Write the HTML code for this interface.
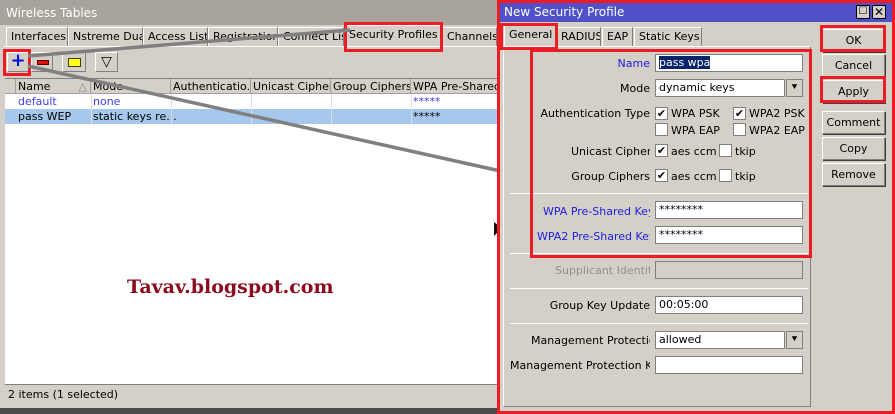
<!DOCTYPE html>
<html><head><meta charset="utf-8"><style>
*{margin:0;padding:0;box-sizing:border-box}
body{width:895px;height:414px;overflow:hidden;background:#4a4a4a;font-family:"DejaVu Sans","Liberation Sans",sans-serif;font-size:11px;color:#000;position:relative}
.a{position:absolute}
.bg{background:#d4d0c8}
.tab{position:absolute;top:27px;height:19px;border:1px solid #fff;border-right-color:#808080;border-bottom:none;line-height:18px;padding-left:4px;background:#d4d0c8;white-space:nowrap;overflow:hidden}
.red{position:absolute;border:3px solid #ed1c24}
.in{position:absolute;background:#fff;border:1px solid #808080;height:18px;line-height:16px;padding-left:3px;white-space:nowrap}
.lbl{position:absolute;right:245px;text-align:right;white-space:nowrap}
.cl{position:absolute;white-space:nowrap;overflow:hidden}
.btn{position:absolute;left:822px;width:63px;height:23px;border:1px solid #808080;border-top-color:#fff;border-left-color:#fff;box-shadow:1px 1px 0 #404040;text-align:center;line-height:21px;background:#d4d0c8}
.cb{position:absolute;width:13px;height:13px;background:#fff;border:1px solid #808080;font-size:11px;line-height:11px;text-align:center}
.sep{position:absolute;left:510px;width:298px;height:1px;background:#b0aca4;border-bottom:1px solid #fff}
.th{position:absolute;top:79px;height:15px;border-right:1px solid #a0a0a0;padding-left:2px;line-height:15px;white-space:nowrap;overflow:hidden}
.blue{color:#2020e0}
</style></head><body>
<div class="a bg" style="left:0;top:0;width:500px;height:408px"></div>
<div class="a" style="left:0;top:0;width:500px;height:25px;background:#a8a49c;color:#fff;font-size:12px;line-height:26px;padding-left:6px">Wireless Tables</div>
<div class="tab" style="left:6px;width:62px">Interfaces</div>
<div class="tab" style="left:68px;width:75px">Nstreme Dual</div>
<div class="tab" style="left:143px;width:65px">Access List</div>
<div class="tab" style="left:208px;width:70px">Registration</div>
<div class="tab" style="left:278px;width:66px">Connect List</div>
<div class="tab" style="left:344px;width:98px;top:25px;height:21px">Security Profiles</div>
<div class="tab" style="left:442px;width:55px">Channels</div>
<div class="a" style="left:4px;top:46px;width:493px;height:1px;background:#fff"></div>
<div class="a" style="left:7px;top:52px;width:22px;height:20px;border:1px solid #fff;border-right-color:#808080;border-bottom-color:#808080;color:#0010e0;font-weight:bold;font-size:18px;line-height:16px;text-align:center">+</div>
<div class="a" style="left:31px;top:52px;width:22px;height:20px;border:1px solid #fff;border-right-color:#808080;border-bottom-color:#808080"><div class="a" style="left:5px;top:7px;width:12px;height:5px;background:#e01010;border:1px solid #600"></div></div>
<div class="a" style="left:62px;top:52px;width:24px;height:20px;border:1px solid #fff;border-right-color:#808080;border-bottom-color:#808080"><div class="a" style="left:5px;top:5px;width:13px;height:9px;background:#ffff20;border:1px solid #404000"></div></div>
<div class="a" style="left:95px;top:52px;width:23px;height:20px;border:1px solid #fff;border-right-color:#808080;border-bottom-color:#808080;text-align:center;font-size:14px;line-height:18px">▽</div>
<div class="a" style="left:5px;top:78px;width:492px;height:306px;background:#fff;border-top:1px solid #808080"></div>
<div class="a bg" style="left:5px;top:79px;width:492px;height:15px;border-bottom:1px solid #a0a0a0"></div>
<div class="th" style="left:5px;width:11px"></div>
<div class="th" style="left:16px;width:75px">Name<span style="float:right;color:#888;padding-right:3px">△</span></div>
<div class="th" style="left:91px;width:80px">Mode</div>
<div class="th" style="left:171px;width:80px">Authenticatio.</div>
<div class="th" style="left:251px;width:80px">Unicast Cipher</div>
<div class="th" style="left:331px;width:80px">Group Ciphers</div>
<div class="th" style="left:411px;width:86px;border:none">WPA Pre-Shared</div>
<div class="a" style="left:18px;top:94px;line-height:15px;color:#4040e0">default</div>
<div class="a" style="left:93px;top:94px;line-height:15px;color:#4040e0">none</div>
<div class="a" style="left:413px;top:94px;line-height:15px;color:#4040e0">*****</div>
<div class="a" style="left:5px;top:109px;width:492px;height:15px;background:#a6c8ec"></div>
<div class="a" style="left:18px;top:109px;line-height:15px">pass WEP</div>
<div class="a" style="left:93px;top:109px;line-height:15px">static keys re...</div>
<div class="a" style="left:413px;top:109px;line-height:15px">*****</div>
<div class="a" style="left:91px;top:94px;width:1px;height:30px;background:#ddd"></div>
<div class="a" style="left:171px;top:94px;width:1px;height:30px;background:#ddd"></div>
<div class="a" style="left:251px;top:94px;width:1px;height:30px;background:#ddd"></div>
<div class="a" style="left:331px;top:94px;width:1px;height:30px;background:#ddd"></div>
<div class="a" style="left:411px;top:94px;width:1px;height:30px;background:#ddd"></div>
<div class="a" style="left:127px;top:276px;font-family:'DejaVu Serif',serif;font-weight:bold;font-size:19px;color:#8b0a1e;letter-spacing:0px">Tavav.blogspot.com</div>
<div class="a" style="left:5px;top:384px;width:492px;height:1px;background:#808080"></div>
<div class="a" style="left:8px;top:386px;line-height:18px">2 items (1 selected)</div>
<div class="red" style="left:344px;top:22px;width:99px;height:30px"></div>
<div class="red" style="left:3px;top:49px;width:28px;height:27px"></div>
<svg class="a" style="left:0;top:0" width="520" height="240"><line x1="28" y1="56" x2="350" y2="30" stroke="#808080" stroke-width="3.5"/><line x1="28" y1="66" x2="505" y2="172" stroke="#808080" stroke-width="3.5"/><path d="M494 222 l0 14 l4 -4 l8 0 z" fill="#111"/></svg>
<div class="a bg" style="left:497px;top:0;width:398px;height:414px"></div>
<div class="a" style="left:500px;top:3px;width:392px;height:19px;background:#5050c8;color:#fff;font-size:12px;line-height:19px;padding-left:4px">New Security Profile</div>
<div class="a bg" style="left:856px;top:5px;width:14px;height:14px;border:1px solid #000;text-align:center;font-size:10px;line-height:12px">☐</div>
<div class="a bg" style="left:872px;top:5px;width:14px;height:14px;border:1px solid #000;text-align:center;font-weight:bold;font-size:12px;line-height:12px">✕</div>
<div class="tab" style="left:504px;width:52px;top:25px;height:21px">General</div>
<div class="tab" style="left:556px;width:45px">RADIUS</div>
<div class="tab" style="left:602px;width:31px">EAP</div>
<div class="tab" style="left:634px;width:68px">Static Keys</div>
<div class="a" style="left:503px;top:46px;width:308px;height:361px;border:1px solid #fff;border-right-color:#808080;border-bottom-color:#808080"></div>
<div class="lbl blue" style="top:57px">Name</div>
<div class="in" style="left:655px;top:54px;width:148px"><span style="background:#0a246a;color:#fff">pass wpa</span></div>
<div class="lbl" style="top:82px">Mode</div>
<div class="in" style="left:655px;top:79px;width:130px">dynamic keys</div>
<div class="a bg" style="left:786px;top:79px;width:17px;height:18px;border:1px solid #808080;text-align:center;line-height:16px;font-size:10px">⯆</div>
<div class="lbl" style="top:107px">Authentication Type</div>
<div class="cb" style="left:655px;top:107px">✔</div><div class="a" style="left:671px;top:107px">WPA PSK</div>
<div class="cb" style="left:733px;top:107px">✔</div><div class="a" style="left:749px;top:107px">WPA2 PSK</div>
<div class="cb" style="left:655px;top:123px"></div><div class="a" style="left:671px;top:124px">WPA EAP</div>
<div class="cb" style="left:733px;top:123px"></div><div class="a" style="left:749px;top:124px">WPA2 EAP</div>
<div class="cl" style="left:570px;width:80px;top:145px;text-align:left;padding-left:1px">Unicast Cipher:</div>
<div class="cb" style="left:655px;top:144px">✔</div><div class="a" style="left:671px;top:145px">aes ccm</div>
<div class="cb" style="left:719px;top:144px"></div><div class="a" style="left:735px;top:145px">tkip</div>
<div class="lbl" style="top:170px">Group Ciphers</div>
<div class="cb" style="left:655px;top:169px">✔</div><div class="a" style="left:671px;top:170px">aes ccm</div>
<div class="cb" style="left:719px;top:169px"></div><div class="a" style="left:735px;top:170px">tkip</div>
<div class="sep" style="top:193px"></div>
<div class="cl blue" style="left:543px;width:107px;top:205px">WPA Pre-Shared Key</div>
<div class="in" style="left:655px;top:201px;width:148px">********</div>
<div class="cl blue" style="left:537px;width:113px;top:230px">WPA2 Pre-Shared Key</div>
<div class="in" style="left:655px;top:226px;width:148px">********</div>
<div class="sep" style="top:253px"></div>
<div class="cl" style="left:555px;width:95px;top:264px;color:#909090">Supplicant Identity</div>
<div class="in" style="left:655px;top:261px;width:148px;background:#d4d0c8"></div>
<div class="sep" style="top:288px"></div>
<div class="lbl" style="top:299px">Group Key Update</div>
<div class="in" style="left:655px;top:296px;width:148px">00:05:00</div>
<div class="sep" style="top:323px"></div>
<div class="cl" style="left:531px;width:119px;top:334px">Management Protection</div>
<div class="in" style="left:655px;top:331px;width:130px">allowed</div>
<div class="a bg" style="left:786px;top:331px;width:17px;height:18px;border:1px solid #808080;text-align:center;line-height:16px;font-size:10px">⯆</div>
<div class="cl" style="left:510px;width:140px;top:359px">Management Protection Key</div>
<div class="in" style="left:655px;top:356px;width:148px"></div>
<div class="btn" style="top:29px">OK</div>
<div class="btn" style="top:54px">Cancel</div>
<div class="btn" style="top:80px">Apply</div>
<div class="btn" style="top:111px">Comment</div>
<div class="btn" style="top:137px">Copy</div>
<div class="btn" style="top:163px">Remove</div>
<div class="red" style="left:497px;top:0;width:398px;height:414px"></div>
<div class="red" style="left:500px;top:23px;width:58px;height:27px"></div>
<div class="red" style="left:530px;top:49px;width:282px;height:209px"></div>
<div class="red" style="left:820px;top:25px;width:66px;height:27px"></div>
<div class="red" style="left:820px;top:76px;width:66px;height:27px"></div>
</body></html>
